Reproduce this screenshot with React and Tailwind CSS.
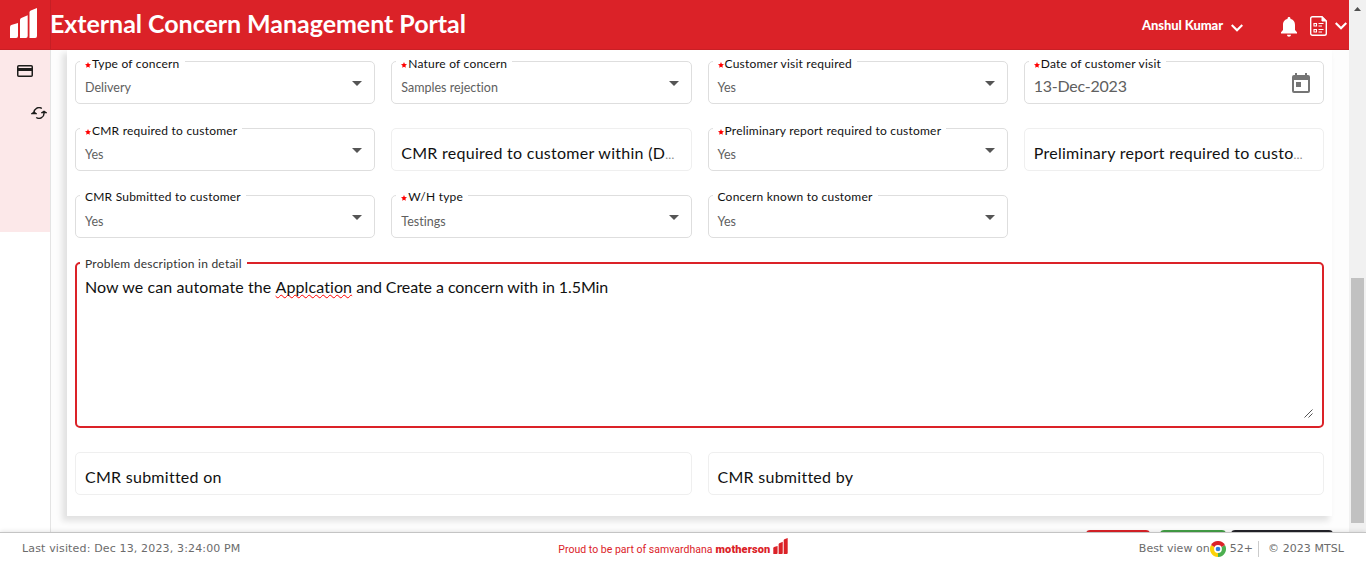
const LATO = "font-['Lato','Open_Sans',sans-serif]";

function Bars({ className }) {
  return (
    <svg viewBox="0 0 27 30" className={className} fill="currentColor" aria-hidden="true">
      <path d="M0 19.200Q0 17.700 1.300 17.100L8 15V28Q8 30 6.200 30H0Z" />
      <path d="M10 12Q10 10.500 11.300 9.900L17.700 7.200V28Q17.700 30 15.900 30H10Z" />
      <path d="M19.500 4.600Q19.500 3.100 20.800 2.500L27 0V28Q27 30 25.200 30H19.500Z" />
    </svg>
  );
}

function Chevron() {
  return (
    <svg viewBox="0 0 12 8" className="h-2 w-3 shrink-0" fill="none" stroke="currentColor" strokeWidth="2.200" aria-hidden="true">
      <path d="M0.700 1L6 6.300L11.300 1" />
    </svg>
  );
}

function Header() {
  return (
    <header className="relative z-10 flex h-[50px] shrink-0 items-stretch border-b border-[#c91f25] bg-[#db2228] text-white">
      <div className="w-[51px] border-r border-[#c61f25] pt-2 pl-2.5">
        <Bars className="h-[30px] w-[27px]" />
      </div>
      <h1 className="-ml-px pt-[7px] text-[25px] leading-[32px] font-bold tracking-[-0.04px] whitespace-nowrap">
        External Concern Management Portal
      </h1>
      <div className="ml-auto flex items-start pr-0.5">
        <span className="mt-[17px] text-[13px] leading-4 font-black tracking-[-0.08px]">Anshul Kumar</span>
        <span className="mt-6 ml-2"><Chevron /></span>
        <svg viewBox="0 0 16 20" className="mt-[17px] ml-[38px] h-5 w-4" fill="currentColor" aria-hidden="true">
          <path d="M8 0c.9 0 1.500.7 1.500 1.500v.5C12.800 2.700 14 5.200 14 8v5L16 15.200V16.500H0V15.200L2 13V8C2 5.200 3.200 2.700 6.500 2V1.500C6.500.7 7.100 0 8 0ZM6 17.800h4c0 1.200-.9 2-2 2s-2-.8-2-2Z" />
        </svg>
        <svg viewBox="0 0 17 20" className="mt-4 ml-[13px] h-5 w-[17px]" fill="none" stroke="currentColor" aria-hidden="true">
          <path strokeWidth="1.400" d="M2.500.700H12L16.300 5V17.500Q16.300 19.300 14.500 19.300H2.500Q.700 19.300.700 17.500V2.500Q.700.700 2.500.700Z" />
          <path fill="currentColor" d="M12 .7V5H16.200Z" />
          <path strokeWidth="1.100" d="M4 7.500H6.500V10H4ZM4 13.500H6.500V16H4ZM8.500 7.500H13.500M8.500 10H12M8.500 13.500H13.500M8.500 16H12" />
        </svg>
        <span className="mt-[22px] ml-2"><Chevron /></span>
      </div>
    </header>
  );
}

function Sidebar() {
  return (
    <aside className="w-[51px] shrink-0 border-r border-[#e4e4e4] bg-white">
      <nav className="flex h-[182px] flex-col bg-[#fce8e9] text-[#1d1d1b]">
        <svg viewBox="0 0 16 12" className="mt-[15px] ml-[17px] h-3 w-4" aria-hidden="true">
          <rect x=".75" y=".75" width="14.500" height="10.500" rx="1" fill="none" stroke="currentColor" strokeWidth="1.500" />
          <path d="M1 3H15V6H1Z" fill="currentColor" />
        </svg>
        <svg viewBox="0 0 16 12" className="mt-[30px] ml-[31px] h-3 w-4" aria-hidden="true">
          <path d="M3 6.500V6A5 5 0 0 1 10.800 1.500M13 5.500V6A5 5 0 0 1 5.200 10.500" fill="none" stroke="currentColor" strokeWidth="1.400" />
          <path d="M0 6.500L3 4.200L6 6.500V7.300H0ZM10 5.500L13 3.500L16 5.500V6.300H10Z" fill="currentColor" />
        </svg>
      </nav>
    </aside>
  );
}

function Star() {
  return (
    <svg viewBox="0 0 10 10" className="mt-px mr-px h-1.5 w-1.5" fill="#f00" aria-hidden="true">
      <path d="M5 0L6.400 3.400L10 3.700L7.300 6.100L8.100 9.700L5 7.800L1.900 9.700L2.700 6.100L0 3.700L3.600 3.400Z" />
    </svg>
  );
}

function Label({ text, required, high }) {
  return (
    <span
      className={`absolute left-1 flex items-center bg-white pr-[5px] pl-[5px] text-[12px] leading-4 tracking-[0.22px] whitespace-nowrap text-[#111] ${
        high ? "-top-[7px]" : "-top-1.5"
      }`}
    >
      {required && <Star />}
      {text}
    </span>
  );
}

function Select({ label, value, required, high }) {
  return (
    <div className="relative flex h-[43px] items-start rounded-[5px] border border-[#dedede] pl-[9px]">
      <Label text={label} required={required} high={high} />
      <span className="mt-[18px] text-[12.5px] leading-4 tracking-[0.02px] text-[#606060]">{value}</span>
      <svg viewBox="0 0 10 5" className="mt-[19px] mr-3 ml-auto h-[5px] w-2.5" fill="#555" aria-hidden="true">
        <path d="M0 0H10L5 5Z" />
      </svg>
    </div>
  );
}

function DateField() {
  return (
    <div className="relative flex h-[43px] items-start rounded-[5px] border border-[#dedede] pl-[9px]">
      <Label text="Date of customer visit" required />
      <span className="mt-3.5 text-[16px] leading-5 tracking-[-0.24px] text-[#606060]">13-Dec-2023</span>
      <svg viewBox="0 0 18 20" className="mt-[11px] mr-[13px] ml-auto h-5 w-[18px]" fill="#757575" aria-hidden="true">
        <path fillRule="evenodd" d="M3 0H5V2H13V0H15V2H16Q18 2 18 4V18Q18 20 16 20H2Q0 20 0 18V4Q0 2 2 2H3ZM2 7V18H16V7ZM4 9H9V14H4Z" />
      </svg>
    </div>
  );
}

function Placeholder({ text, cut }) {
  return (
    <div className="h-[43px] overflow-hidden rounded-[5px] border border-[#efefef] pt-3.5 pl-[9px] text-[16px] leading-5 tracking-[0.27px] whitespace-nowrap text-[#111]">
      {text}
      {cut && <span className="text-[12px] text-[#888]">…</span>}
    </div>
  );
}

function Scrollbar() {
  return (
    <div className="flex w-[17px] shrink-0 flex-col items-center bg-[#f1f1f1]">
      <svg viewBox="0 0 7 4" className="mt-[7px] h-1 w-[7px]" fill="#505050" aria-hidden="true">
        <path d="M3.500 0L7 4H0Z" />
      </svg>
      <div className="mt-[267px] h-[245px] w-[13px] bg-[#c1c1c1]" />
    </div>
  );
}

function Chrome() {
  return (
    <svg viewBox="0 0 16 16" className="h-4 w-4" aria-hidden="true">
      <path fill="#fcd209" d="M8 8L8 16A8 8 0 0 1 1.070 4Z" />
      <path fill="#4caf50" d="M8 8L14.930 4A8 8 0 0 1 8 16Z" />
      <path fill="#db2228" d="M8 8L1.070 4A8 8 0 0 1 14.930 4Z" />
      <circle cx="8" cy="8" r="3.900" fill="#fff" />
      <circle cx="8" cy="8" r="2.300" fill="#2f7de1" />
    </svg>
  );
}

function Footer() {
  return (
    <footer className="relative z-20 grid h-[30px] shrink-0 grid-cols-3 items-start border-t border-[#c4c4c4] bg-white font-['DejaVu_Sans',sans-serif] text-[11px] leading-4 text-[#6b6b6b] shadow-[0_-1px_4px_rgba(0,0,0,0.1)]">
      <span className="pt-2 pl-[22px] tracking-[0.15px]">Last visited: Dec 13, 2023, 3:24:00 PM</span>
      <div className="flex items-start pl-[103px] font-['Roboto',sans-serif] whitespace-nowrap text-[#db2228]">
        <span className="pt-[9px] text-[10.500px] leading-4 tracking-[0.02px]">Proud to be part of samvardhana</span>
        <strong className="mt-[9px] ml-[3px] font-black tracking-[0.12px]">motherson</strong>
        <Bars className="mt-[5px] ml-[3px] h-4 w-[15px]" />
      </div>
      <div className="flex justify-end pt-2 pr-[22px]">
        <span className="tracking-[0.05px]">Best view on</span>
        <Chrome />
        <span className="ml-1">52+</span>
        <span className="ml-[5px] h-4 border-l border-[#ccc] pl-[9px] tracking-[0.06px]">© 2023 MTSL</span>
      </div>
    </footer>
  );
}

export default function App() {
  return (
    <div className={`flex h-[562px] w-[1366px] flex-col overflow-hidden bg-white ${LATO}`}>
      <div className="flex h-[532px] shrink-0">
        <div className="flex min-w-0 flex-1 flex-col">
          <Header />
          <div className="flex min-h-0 flex-1">
            <Sidebar />
            <main className="min-w-0 flex-1 overflow-hidden bg-[#fdfdfd] pr-[17px] pl-4">
              <section className="h-[466px] bg-white px-2 pt-[11px] shadow-[-4px_4px_6px_1px_rgba(0,0,0,0.11)]">
                <div className="grid grid-cols-4 gap-x-4 gap-y-6">
                  <Select label="Type of concern" value="Delivery" required />
                  <Select label="Nature of concern" value="Samples rejection" required />
                  <Select label="Customer visit required" value="Yes" required />
                  <DateField />
                  <Select label="CMR required to customer" value="Yes" required />
                  <Placeholder text="CMR required to customer within (D" cut />
                  <Select label="Preliminary report required to customer" value="Yes" required />
                  <Placeholder text="Preliminary report required to custo" cut />
                  <Select label="CMR Submitted to customer" value="Yes" high />
                  <Select label="W/H type" value="Testings" required high />
                  <Select label="Concern known to customer" value="Yes" high />
                </div>
                <div className="relative mt-6 flex h-[166px] flex-col rounded-[5px] border-2 border-[#db2228] pl-2">
                  <span className="absolute -top-2 left-[3px] bg-white pr-[5px] pl-[5px] text-[12px] leading-4 tracking-[0.23px] whitespace-nowrap text-[#333]">
                    Problem description in detail
                  </span>
                  <p className="mt-[13px] text-[16px] leading-5 tracking-[-0.07px] text-[#111]">
                    <span className="tracking-[0.08px]">Now we can automate the </span>
                    <span className="tracking-[0.1px] underline decoration-[#f00] decoration-wavy decoration-[0.7px] underline-offset-1 [text-decoration-skip-ink:none]">
                      Applcation
                    </span>{" "}
                    and Create a concern with in 1.5Min
                  </p>
                  <svg viewBox="0 0 9 9" className="mt-auto mr-[9px] mb-2 ml-auto h-[9px] w-[9px]" stroke="#555" strokeWidth="1" aria-hidden="true">
                    <path d="M0.500 8.500L8.500 0.500M4.500 8.500L8.500 4.500" />
                  </svg>
                </div>
                <div className="mt-6 grid grid-cols-2 gap-4">
                  <Placeholder text="CMR submitted on" />
                  <Placeholder text="CMR submitted by" />
                </div>
              </section>
              <div className="mt-3.5 flex justify-end">
                <div className="mr-2.5 h-8 w-16 rounded-[4px] bg-[#db2228]" />
                <div className="mr-[5px] h-8 w-[66px] rounded-[4px] bg-[#43a047]" />
                <div className="-mr-px h-8 w-[102px] rounded-[4px] bg-[#24242a]" />
              </div>
            </main>
          </div>
        </div>
        <Scrollbar />
      </div>
      <Footer />
    </div>
  );
}
